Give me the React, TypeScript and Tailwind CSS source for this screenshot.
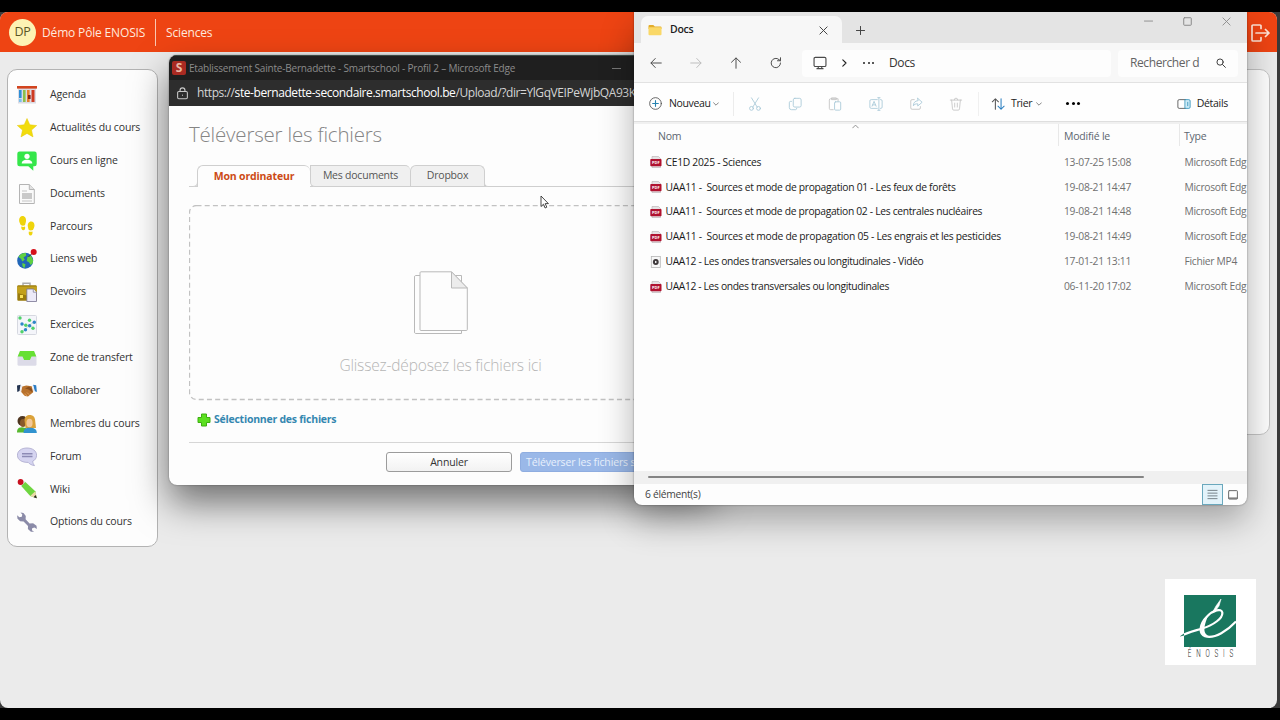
import type { ReactNode } from 'react';

const courseMenu = [
  { id: 'agenda', label: 'Agenda' },
  { id: 'news', label: 'Actualités du cours' },
  { id: 'online', label: 'Cours en ligne' },
  { id: 'documents', label: 'Documents' },
  { id: 'path', label: 'Parcours' },
  { id: 'links', label: 'Liens web' },
  { id: 'homework', label: 'Devoirs' },
  { id: 'exercises', label: 'Exercices' },
  { id: 'transfer', label: 'Zone de transfert' },
  { id: 'collab', label: 'Collaborer' },
  { id: 'members', label: 'Membres du cours' },
  { id: 'forum', label: 'Forum' },
  { id: 'wiki', label: 'Wiki' },
  { id: 'options', label: 'Options du cours' },
];

const files = [
  { name: 'CE1D 2025 - Sciences', date: '13-07-25 15:08', kind: 'pdf', tracking: 'tracking-[-0.28px]' },
  { name: 'UAA11 -  Sources et mode de propagation 01 - Les feux de forêts', date: '19-08-21 14:47', kind: 'pdf', tracking: 'tracking-[-0.3px]' },
  { name: 'UAA11 -  Sources et mode de propagation 02 - Les centrales nucléaires', date: '19-08-21 14:48', kind: 'pdf', tracking: 'tracking-[-0.31px]' },
  { name: 'UAA11 -  Sources et mode de propagation 05 - Les engrais et les pesticides', date: '19-08-21 14:49', kind: 'pdf', tracking: 'tracking-[-0.28px]' },
  { name: 'UAA12 - Les ondes transversales ou longitudinales - Vidéo', date: '17-01-21 13:11', kind: 'video', tracking: 'tracking-[-0.33px]' },
  { name: 'UAA12 - Les ondes transversales ou longitudinales', date: '06-11-20 17:02', kind: 'pdf', tracking: 'tracking-[-0.36px]' },
];

const menuIcons: Record<string, ReactNode> = {
  agenda: (
    <>
      <rect x="1" y="2" width="18" height="16.5" fill="#dcdce4" />
      <rect x="0" y="1" width="20" height="2.6" fill="#d2441f" />
      <rect x="2" y="5" width="2.600" height="8" fill="#2f8fd6" />
      <rect x="2" y="14" width="2.600" height="3" fill="#7ac0ec" />
      <rect x="6" y="5" width="2.600" height="12" fill="#8bbf4a" />
      <rect x="10" y="5" width="2.600" height="12" fill="#e87f2b" />
      <rect x="11" y="10" width="2.600" height="4" fill="#8c1f12" />
      <rect x="14.500" y="5" width="3" height="12" fill="#cf3b22" />
    </>
  ),
  news: <path d="M10 .5l2.800 6.300 6.900.7-5.200 4.600 1.500 6.800-6-3.500-6 3.500 1.500-6.800L.300 7.500l6.900-.7z" fill="#f2dc0c" stroke="#e5c80a" strokeWidth=".5" />,
  online: (
    <>
      <path d="M2.500.5h15a2.200 2.200 0 0 1 2.200 2.200v10.300a2.200 2.200 0 0 1-2.200 2.200H16.300v4.600l-5-4.600H2.500A2.200 2.200 0 0 1 .300 13V2.700A2.200 2.200 0 0 1 2.500.500z" fill="#35e64a" />
      <circle cx="10" cy="5.300" r="2.600" fill="#fff" />
      <path d="M4.700 12.600c0-2.800 2.300-3.900 5.300-3.900s5.300 1.100 5.300 3.900z" fill="#fff" />
    </>
  ),
  documents: (
    <>
      <path d="M2.500.5h9.800l5 5v14H2.500z" fill="#fafafa" stroke="#b4b4b4" />
      <path d="M12.300.5v5h5" fill="#e2e2e2" stroke="#b4b4b4" />
      <path d="M5 7h5M5 17h10" stroke="#c4c4c4" strokeWidth="1.200" />
      <rect x="5" y="9" width="10" height="6" fill="#c9c9c9" />
    </>
  ),
  path: (
    <g fill="#efd40c">
      <path d="M5.500 0C8 0 9.300 2.400 9 5c-.2 1.800-.7 3-1 4.200-1.500.7-3 .6-4.200-.1C3.200 7.600 2 6 2.100 4 2.200 1.800 3.500 0 5.500 0z" />
      <path d="M4.300 10.500c1.200.6 2.600.6 3.700.1.600 1.900-.1 3.700-1.600 3.700-1.600 0-2.400-1.900-2.100-3.800z" />
      <path d="M14.200 5.500c-2.500 0-3.700 2.400-3.400 4.700.2 1.600.7 2.800 1 3.900 1.400.6 2.900.5 4.100-.1.700-1.500 1.700-2.900 1.600-4.800-.1-2.200-1.300-3.700-3.300-3.700z" />
      <path d="M15.500 15.400c-1.200.6-2.500.6-3.600.1-.6 1.900.1 4 1.600 4 1.600 0 2.300-2.200 2-4.100z" />
    </g>
  ),
  links: (
    <>
      <circle cx="8.200" cy="11.700" r="8" fill="#2166b8" />
      <path d="M1.500 8C3 5 6 3.600 8.800 4l.5 2.500-2.800 2 1.300 2.300-2.600 1.800-1-2.600zM10.500 8l3-1.500c2.200 2.200 3 5 2.300 7.300l-2 2.400-1.800-3-2.300-1.200zM5.500 14l3 1.200-1 3.900c-1.800-.6-2.600-2.600-2-5.100z" fill="#5fd042" />
      <path d="M11.500 8l4-4" stroke="#333" strokeWidth="1" />
      <circle cx="16.700" cy="3" r="3" fill="#d6101a" />
    </>
  ),
  homework: (
    <>
      <path d="M6 3.500V1.200h7v2.300" fill="none" stroke="#aaa" strokeWidth="1.500" />
      <rect x=".3" y="3.300" width="19.400" height="15.500" rx="1" fill="#9a7b0c" />
      <path d="M.3 4.500h19.400V11L10 13.500.300 11z" fill="#c2a01c" />
      <rect x="3" y="13" width="3" height="3" fill="#fbe35a" />
      <path d="M9.800 7h6.500l3.200 3.200v9.300H9.800z" fill="#eceaf8" stroke="#777392" strokeWidth=".8" />
      <path d="M16.300 7v3.200h3.200" fill="#fff" stroke="#777392" strokeWidth=".7" />
    </>
  ),
  exercises: (
    <>
      <rect x=".5" y=".5" width="19" height="19" rx="1" fill="#f4f5fa" stroke="#d6d8e0" />
      <path d="M5 9l4 1.500 6 1M8 15l4-5 5-2.500M5 16.500l4-2" stroke="#b9d9cc" strokeWidth=".8" fill="none" />
      <g fill="#4fd16a">
        <circle cx="3" cy="3" r="1.700" /><circle cx="12.500" cy="5.300" r="1.700" /><circle cx="8.800" cy="10.300" r="1.700" /><circle cx="16" cy="13.300" r="1.700" /><circle cx="5" cy="16.800" r="1.700" />
      </g>
      <g fill="#2f86c8">
        <circle cx="5" cy="9" r="1.700" /><circle cx="12.600" cy="10.700" r="1.700" /><circle cx="17.300" cy="7.300" r="1.700" /><circle cx="8.500" cy="14.700" r="1.700" />
      </g>
    </>
  ),
  transfer: (
    <>
      <path d="M3 3h14l2.500 6v7.300a1.500 1.500 0 0 1-1.500 1.500H2A1.500 1.500 0 0 1 .500 16.300V9z" fill="#dcdbe8" />
      <path d="M3 3h14l2.300 5.600h-4.800l-1.600 3.300H7.100L5.500 8.600H.700z" fill="#66e032" />
    </>
  ),
  collab: (
    <>
      <path d="M0 4.500l3.600-.7L2.500 10 .300 11z" fill="#23334f" />
      <path d="M16 3.800l3.200.500.700 6.700-2-.8z" fill="#2b7cc4" />
      <path d="M4 4.500l1.200-.3L4 11l-1-.6zM15.200 4.200l1 .3 1 5.900-1 .4z" fill="#e8e8ee" />
      <path d="M5.300 5.500l4-1 5.400.700 1.500 6-5.200 4.300L8 15 4.200 11z" fill="#b9722c" />
      <path d="M8 7.500l4-2 3 2.500.500 3.300-4.500-3z" fill="#8a4f1d" />
      <path d="M8 14.800l-2-2M10 15l-2-2.500M12.300 13.800L10 11.500" stroke="#e0a261" strokeWidth=".9" />
    </>
  ),
  members: (
    <>
      <path d="M0 18.500c0-3.800 1.500-5 5-5.200l4.500 1v4.200z" fill="#58b830" />
      <circle cx="5.500" cy="7" r="5" fill="#4f3620" />
      <ellipse cx="6" cy="9" rx="3" ry="4" fill="#8b5a2b" />
      <path d="M7.500 6c0-3.500 2.500-5 5.300-5 3.200 0 5.400 2 5.400 6l.8 7H8.500z" fill="#dba23a" />
      <ellipse cx="12.500" cy="9" rx="3.100" ry="4.300" fill="#f4c99a" />
      <path d="M6.500 19c0-3.800 2-5.300 6-5.300 4.500 0 7.300 1.300 7.300 5.300z" fill="#3193cf" />
    </>
  ),
  forum: (
    <>
      <path d="M10 1c5.600 0 9.600 3 9.600 7.200 0 3-1.700 5-4 6.200.2 1.800 1 3 1.900 4.200-2.800-.3-5-1.600-6.300-3.200C5 15.600.400 12.800.400 8.200.4 4 4.400 1 10 1z" fill="#d5d4f0" stroke="#a9a7cc" strokeWidth=".8" />
      <path d="M5 6.800h10.500M5 9.500h10.500" stroke="#8d8bb5" strokeWidth="1.500" />
    </>
  ),
  wiki: (
    <>
      <path d="M3.800 6.500L7.800 2.600 18.300 12.300l1.600 7-6.700-2.300z" fill="#6fd640" />
      <path d="M18.300 12.300l1.600 7-6.700-2.300z" fill="#ecd9a8" />
      <path d="M18.600 16l1.300 3.300-3.300-1.100z" fill="#222" />
      <path d="M2.600 5.200L6.300 1.400l1.900 1.700-4 4z" fill="#e9eef0" />
      <circle cx="3.600" cy="3" r="2.900" fill="#c8101f" />
    </>
  ),
  options: (
    <path d="M3.500.5l3 .6 2.300 2.800-.2 3.300 4 4.200 3.500-.2 3.400 2.500.4 3.200-2.500-1.500-2.200.8-.3 2 2.200 1.600-3.200-.1-3-2.800.1-2.900-4.400-4.500-3.400-.2L.500 6.700.100 3.200 2.400 5.200l2.400-.5.500-2.200z" fill="#8b8ba8" />
  ),
};

function Svg({ size = 14, box = 16, className = '', children }: { size?: number; box?: number; className?: string; children: ReactNode }) {
  return (
    <svg width={size} height={size} viewBox={`0 0 ${box} ${box}`} fill="none" stroke="currentColor" strokeLinecap="round" strokeLinejoin="round" className={`block shrink-0 ${className}`}>
      {children}
    </svg>
  );
}

function PageHeader() {
  return (
    <header className="flex h-10 items-center bg-[#ee4413] pl-[9px] pr-[7px] pt-px text-white">
      <div className="flex size-[27px] items-center justify-center rounded-full bg-[#fdf3b4] text-[12.5px] tracking-[-0.3px] text-[#5a5624]">DP</div>
      <span className="ml-[6px] w-[113px] whitespace-nowrap text-[12px] tracking-[-0.16px] text-[#ffe9de]">Démo Pôle ENOSIS</span>
      <span className="h-[27px] w-px bg-[#f9c7b2]" />
      <span className="ml-[10px] text-[12px] tracking-[-0.16px] text-[#ffe9de]">Sciences</span>
      <Svg size={20} box={20} className="ml-auto text-[#ffe3d6]">
        <path d="M11 5.500V3a1 1 0 0 0-1-1H3a1 1 0 0 0-1 1v14a1 1 0 0 0 1 1h7a1 1 0 0 0 1-1v-2.500M6 10h13M15.500 6.500L19 10l-3.500 3.500" strokeWidth="1.700" />
      </Svg>
    </header>
  );
}

function CourseMenu() {
  return (
    <nav className="h-[478px] w-[151px] rounded-[10px] border border-[#b3b3b3] bg-[#fdfdfd] pl-[9px] pt-[8.500px]">
      {courseMenu.map((item) => (
        <a key={item.id} className="flex h-[32.88px] items-center">
          <svg width="20" height="20" viewBox="0 0 20 20" className="block shrink-0">{menuIcons[item.id]}</svg>
          <span className="ml-[13px] whitespace-nowrap text-[10.500px] tracking-[-0.15px] text-[#333]">{item.label}</span>
        </a>
      ))}
    </nav>
  );
}

function UploadTabs() {
  return (
    <div className="mt-[15px] flex h-[22px] items-end border-b border-[#cfcfcf] text-[10.500px] text-[#555]">
      <div className="-mb-px h-[8px] w-[9px] rounded-br-[5px] border-b border-r border-[#cfcfcf] bg-[#fdfdfd]" />
      <div className="-mb-px -ml-px flex h-[22px] w-[113px] items-center justify-center rounded-t-[6px] border-l border-t border-[#cfcfcf] bg-[#fdfdfd] font-bold tracking-[-0.15px] text-[#cc4a15]">Mon ordinateur</div>
      <div className="-mb-px flex h-[22px] w-[100px] items-center justify-center rounded-bl-[5px] rounded-tr-[5px] border border-r-0 border-[#cfcfcf] bg-[#f0f0f0] tracking-[-0.22px]">Mes documents</div>
      <div className="flex h-[21px] w-[75px] items-center justify-center rounded-t-[6px] border border-b-0 border-[#cfcfcf] bg-[#f0f0f0] tracking-[-0.2px]">Dropbox</div>
      <div className="-mb-px -ml-px h-[6px] w-[4px] rounded-bl-[4px] border-b border-l border-[#cfcfcf] bg-[#fdfdfd]" />
    </div>
  );
}

function UploadWindow() {
  return (
    <section className="absolute left-[169px] top-[43px] flex h-[430px] w-[545px] flex-col overflow-hidden rounded-lg bg-[#fdfdfd] shadow-[0_18px_36px_rgba(0,0,0,0.52),0_0_2px_rgba(0,0,0,0.4)]">
      <div className="flex h-[25px] shrink-0 items-center border-t border-[#3a4a45] bg-[#1f1f1f] pl-[3px]">
        <span className="flex size-[14px] items-center justify-center rounded-[2px] bg-[#a92a22] text-[12px] font-bold leading-none text-[#e9b9a5]">S</span>
        <span className="ml-[3px] w-[423px] whitespace-nowrap text-[10px] tracking-[-0.19px] text-[#8b8b8b]">Etablissement Sainte-Bernadette - Smartschool - Profil 2 – Microsoft Edge</span>
        <span className="h-px w-[9px] bg-[#777]" />
      </div>
      <div className="flex h-[26px] shrink-0 items-center bg-[#2d2d2d] pl-[7px] text-[#c8c8c8]">
        <Svg size={13}>
          <rect x="2" y="5.500" width="12" height="9" rx="1.500" strokeWidth="1.300" />
          <path d="M5 5.500V4a3 3 0 0 1 6 0v1.500M8 9.800v.3" strokeWidth="1.400" />
        </Svg>
        <span className="ml-[8px] whitespace-nowrap text-[12px] tracking-[-0.42px] text-[#d5d5d5]">
          https://<span className="text-white">ste-bernadette-secondaire.smartschool.be</span>/Upload/?dir=YlGqVEIPeWjbQA93K
        </span>
      </div>

      <div className="flex flex-1 flex-col px-5">
        <h1 className="mt-[12px] h-[32px] text-[20.500px] font-light leading-[32px] tracking-[-0.2px] text-[#858585]">Téléverser les fichiers</h1>
        <UploadTabs />

        <div className="mt-[18px] flex h-[196px] w-[503px] flex-col items-center rounded-lg">
          <svg width="505" height="196" className="absolute left-5 block">
            <rect x=".5" y=".5" width="503" height="194" rx="7" fill="none" stroke="#c2c2c2" strokeWidth="1.300" strokeDasharray="5 3.200" />
          </svg>
          <svg width="56" height="64" viewBox="0 0 56 64" className="mt-[66px] block" fill="#fdfdfd" stroke="#b9b9b9">
            <path d="M2.500 4.500h46v58h-46a1.500 1.500 0 0 1-1-1.500V6a1.500 1.500 0 0 1 1-1.500z" />
            <path d="M8 .800h30.500L54.300 17v41.500a1 1 0 0 1-1 1H8a1 1 0 0 1-1-1V1.800a1 1 0 0 1 1-1z" />
            <path d="M38.500.800V17h15.800z" fill="#ececec" />
          </svg>
          <p className="mt-[16px] text-[15.500px] font-light leading-[28px] tracking-[-0.18px] text-[#b5b5b5]">Glissez-déposez les fichiers ici</p>
        </div>

        <a className="mt-[11px] flex h-4 items-center pl-[8px] text-[10.500px] font-bold tracking-[-0.24px] text-[#3487b0]">
          <svg width="14" height="14" viewBox="0 0 14 14" className="mr-[3px] block">
            <path d="M4.500 1h5v3.500H13v5H9.500V13h-5V9.500H1v-5h3.500z" fill="#5be01f" stroke="#3fae12" strokeLinejoin="round" />
          </svg>
          Sélectionner des fichiers
        </a>

        <div className="mt-[14px] flex border-t border-[#d6d6d6] pl-[197px] pt-[9px]">
          <button className="h-[20px] w-[126px] rounded-[3px] border border-[#9c9c9c] bg-linear-to-b from-white to-[#f2f2f2] text-[10.500px] leading-[18px] tracking-[-0.15px] text-[#333]">Annuler</button>
          <button className="ml-[8px] h-[20px] w-[174px] whitespace-nowrap rounded-[3px] border border-[#8fade0] bg-[#9ab8e8] pl-[5px] text-left text-[10.500px] leading-[18px] tracking-[-0.15px] text-[#e8f0fc]">Téléverser les fichiers sélectionnés</button>
        </div>
      </div>
    </section>
  );
}

function PdfIcon() {
  return (
    <svg width="12" height="12" viewBox="0 0 12 12" className="block shrink-0">
      <path d="M2 .500h6.500L10.500 2.500v9H2z" fill="#e5e1e3" stroke="#b9aeb2" strokeWidth=".6" />
      <rect x=".3" y="3" width="11.200" height="7.200" rx=".8" fill="#b0122f" />
      <text x="5.900" y="8" textAnchor="middle" fontSize="4" fontWeight="700" fill="#fff" fontFamily="Open Sans, sans-serif">PDF</text>
    </svg>
  );
}

function VideoIcon() {
  return (
    <svg width="12" height="12" viewBox="0 0 12 12" className="block shrink-0">
      <rect x="1.300" y=".5" width="9" height="11" fill="#f7f7f7" stroke="#b5b5b5" strokeWidth=".8" />
      <circle cx="5.800" cy="6" r="2.900" fill="#3f3a3c" />
      <path d="M5 4.700l2.200 1.300L5 7.300z" fill="#fff" />
    </svg>
  );
}

function ExplorerTitleBar() {
  return (
    <div className="flex h-[31px] shrink-0 bg-[#e4e4e4] pl-[7px]">
      <div className="mt-1 flex h-[27px] w-[201px] items-center rounded-t-[7px] bg-[#f7f7f7] pl-[7px] pr-[14px] pt-px">
        <svg width="14" height="12" viewBox="0 0 14 12" className="block">
          <path d="M.5 2a1 1 0 0 1 1-1h3.800l1.500 1.500h5.700a1 1 0 0 1 1 1V5H.500z" fill="#e3ad2b" />
          <rect x=".5" y="3.300" width="13" height="8" rx="1" fill="#fad867" />
        </svg>
        <span className="ml-[8px] text-[10.500px] font-semibold tracking-[-0.3px] text-[#1d1d1d]">Docs</span>
        <Svg size={9} box={10} className="ml-auto text-[#444]"><path d="M1 1l8 8M9 1L1 9" strokeWidth="1.100" /></Svg>
      </div>
      <Svg size={9} box={10} className="ml-[14px] mt-[14px] text-[#444]"><path d="M5 .500v9M.500 5h9" strokeWidth="1.100" /></Svg>
      <div className="ml-auto flex items-start gap-[30px] pr-[16px] pt-[5px] text-[#8a8a8a]">
        <Svg size={9} box={10}><path d="M.5 4.500h9" /></Svg>
        <Svg size={9} box={10}><rect x=".8" y=".8" width="8.400" height="8.400" rx=".8" strokeWidth="1.100" /></Svg>
        <Svg size={9} box={10}><path d="M1 1l8 8M9 1L1 9" /></Svg>
      </div>
    </div>
  );
}

function ExplorerNav() {
  return (
    <div className="flex h-10 shrink-0 items-center border-b border-[#e2e2e2] bg-[#f7f7f7] pl-[16px] pr-[8px] pt-px text-[#4a4a4a]">
      <div className="flex w-[152px] shrink-0 gap-[28px]">
        <Svg size={12}><path d="M15 8H1.500M7 2L1.200 8 7 14" strokeWidth="1.300" /></Svg>
        <Svg size={12} className="text-[#bcbcbc]"><path d="M1 8h13.500M9 2l5.800 6L9 14" strokeWidth="1.300" /></Svg>
        <Svg size={12}><path d="M8 15V1.500M2 7l6-5.800L14 7" strokeWidth="1.300" /></Svg>
        <Svg size={12}><path d="M14 8a6.200 6.200 0 1 1-2-4.500L14 5M14 1v4h-4" strokeWidth="1.300" /></Svg>
      </div>
      <div className="flex h-[27px] w-[309px] shrink-0 items-center rounded bg-[#fdfdfd] pl-[11px]">
        <Svg size={14}><rect x="1.200" y="1.500" width="13.600" height="10.500" rx="1.500" strokeWidth="1.300" /><path d="M4.500 14.500h7M6 12.500v2M10 12.500v2" strokeWidth="1.300" /></Svg>
        <Svg size={8} box={10} className="ml-[13px] text-[#222]"><path d="M3.500 1l4 4-4 4" strokeWidth="1.400" /></Svg>
        <span className="ml-[15px] flex gap-[2.500px]">
          <i className="size-[2px] rounded-full bg-[#222]" />
          <i className="size-[2px] rounded-full bg-[#222]" />
          <i className="size-[2px] rounded-full bg-[#222]" />
        </span>
        <span className="ml-[15px] text-[12px] tracking-[-0.4px] text-[#333]">Docs</span>
      </div>
      <div className="ml-[7px] flex h-[27px] w-[120px] shrink-0 items-center rounded bg-[#fdfdfd] pl-[12px]">
        <span className="w-[70px] whitespace-nowrap text-[12px] tracking-[-0.4px] text-[#636363]">Rechercher d</span>
        <Svg size={10} className="ml-[16px] text-[#333]"><circle cx="6.500" cy="6.500" r="5" strokeWidth="1.500" /><path d="M10.500 10.500L15 15" strokeWidth="1.500" /></Svg>
      </div>
    </div>
  );
}

function ExplorerToolbar() {
  return (
    <div className="flex h-[39px] shrink-0 items-center border-b border-[#dedede] bg-[#fefefe] pl-[15px] pr-[19px] pt-[3px] text-[10.500px] text-[#222]">
      <Svg size={13}><circle cx="8" cy="8" r="7.200" stroke="#555" strokeWidth="1.100" /><path d="M8 4.500v7M4.500 8h7" stroke="#2682b0" strokeWidth="1.400" /></Svg>
      <span className="ml-[7px] w-[44px] tracking-[-0.35px]">Nouveau</span>
      <Svg size={6} box={10} className="text-[#777]"><path d="M1 3l4 4 4-4" strokeWidth="1.500" /></Svg>
      <span className="ml-[14px] h-[24px] w-px bg-[#ececec]" />
      <div className="ml-[14px] flex w-[215px] shrink-0 gap-[26.200px] text-[#a9c9d8]">
        <Svg><path d="M4 1l6.500 10.500M12 1L5.500 11.500" /><circle cx="4" cy="13" r="2.200" /><circle cx="12" cy="13" r="2.200" /></Svg>
        <Svg><rect x="6" y="1.500" width="9" height="10" rx="1.800" /><path d="M4 5H3a1.500 1.500 0 0 0-1.500 1.500V12A2.500 2.500 0 0 0 4 14.500h4.500A1.500 1.500 0 0 0 10 13" /></Svg>
        <Svg><path d="M6 14.500H3A1.500 1.500 0 0 1 1.500 13V3.500A1.500 1.500 0 0 1 3 2h8.500V5M4.500 1h5v2h-5z" stroke="#c3c3c3" /><rect x="7.500" y="5.500" width="7" height="9.500" rx="1.200" /></Svg>
        <Svg><path d="M9.500 3H2.500A1.500 1.500 0 0 0 1 4.500v7A1.500 1.500 0 0 0 2.500 13h7M13 3h.5A1.500 1.500 0 0 1 15 4.500v7a1.500 1.500 0 0 1-1.500 1.500H13M11.300 1v14M10 .800h2.600M10 15.200h2.600M3.500 10.500L5.800 5l2.300 5.500M4.300 9h3" /></Svg>
        <Svg><path d="M6 3H3.500A1.500 1.500 0 0 0 2 4.500v8A1.500 1.500 0 0 0 3.500 14h8a1.500 1.500 0 0 0 1.500-1.500V11" stroke="#c3c3c3" /><path d="M10 1.500l5 4.500-5 4.300V7.800C7.500 7.600 6 8.500 5 10c0-3.300 1.700-5.500 5-5.800z" /></Svg>
        <Svg className="text-[#c6c6c6]"><path d="M1.500 3.500h13M3 3.500l1 10a1.500 1.500 0 0 0 1.500 1.500h5a1.500 1.500 0 0 0 1.500-1.500l1-10M6 3.300a2 2 0 0 1 4 0M6.500 7v4.500M9.500 7v4.500" /></Svg>
      </div>
      <span className="ml-[15px] h-[24px] w-px bg-[#f0f0f0]" />
      <Svg size={14} className="ml-[12px] text-[#555]"><path d="M5 14V2M1.500 5.500L5 2l3.500 3.500" strokeWidth="1.200" /><path d="M11.500 2v12M8 10.500l3.500 3.500 3.500-3.500" stroke="#2c7fc0" strokeWidth="1.200" /></Svg>
      <span className="ml-[6px] w-[25px] tracking-[-0.35px]">Trier</span>
      <Svg size={6} box={10} className="text-[#777]"><path d="M1 3l4 4 4-4" strokeWidth="1.500" /></Svg>
      <span className="ml-[24px] flex gap-[2.500px]">
        <i className="size-[3px] rounded-full bg-black" />
        <i className="size-[3px] rounded-full bg-black" />
        <i className="size-[3px] rounded-full bg-black" />
      </span>
      <Svg size={14} className="ml-auto"><path d="M10 3H2.500A1.500 1.500 0 0 0 1 4.500v7A1.500 1.500 0 0 0 2.500 13H10" stroke="#555" /><path d="M9.500 3h4A1.500 1.500 0 0 1 15 4.500v7a1.500 1.500 0 0 1-1.500 1.500h-4zM12.300 6v4" stroke="#3795bd" fill="#cdebf7" /></Svg>
      <span className="ml-[6px] tracking-[-0.3px]">Détails</span>
    </div>
  );
}

function ExplorerWindow() {
  return (
    <section className="absolute left-[634px] top-0 flex h-[493px] w-[613px] flex-col overflow-hidden rounded-b-lg bg-[#fdfdfd] shadow-[0_16px_34px_rgba(0,0,0,0.3),0_0_2px_rgba(0,0,0,0.45)]">
      <ExplorerTitleBar />
      <ExplorerNav />
      <ExplorerToolbar />
      <div className="flex h-[28px] shrink-0 items-start border-t-2 border-[#f0f0f0] text-[10.500px] tracking-[-0.22px] text-[#5c6670]">
        <span className="w-[424px] shrink-0 pl-[24px] leading-[24px]">Nom</span>
        <span className="h-[22px] w-[121px] shrink-0 border-l border-[#e8e8e8] pl-[5px] leading-[24px]">Modifié le</span>
        <span className="h-[22px] border-l border-[#e8e8e8] pl-[4px] leading-[24px]">Type</span>
        <Svg size={7} box={10} className="absolute left-[218px] top-[111px] text-[#888]"><path d="M1 7l4-4 4 4" strokeWidth="1.300" /></Svg>
      </div>
      <div className="flex-1 text-[10.300px]">
        {files.map((file) => (
          <div key={file.name} className="flex h-[24.850px] items-center whitespace-pre">
            <div className="flex w-[430px] shrink-0 items-center pl-[16px]">
              {file.kind === 'pdf' ? <PdfIcon /> : <VideoIcon />}
              <span className={`ml-[3.500px] text-[#1a1a1a] ${file.tracking}`}>{file.name}</span>
            </div>
            <span className="w-[120.500px] shrink-0 tracking-[-0.27px] text-[#707070]">{file.date}</span>
            <span className="tracking-[-0.3px] text-[#707070]">{file.kind === 'pdf' ? 'Microsoft Edg' : 'Fichier MP4'}</span>
          </div>
        ))}
      </div>
      <div className="flex h-[13px] shrink-0 items-start bg-[#f0f0f0] pl-[14px] pt-[5px]">
        <span className="h-[2px] w-[496px] rounded bg-[#848484]" />
      </div>
      <div className="flex h-[21px] shrink-0 items-center pl-[11px] pr-[9px] text-[10.300px] text-[#444]">
        <span className="tracking-[-0.3px]">6 élément(s)</span>
        <span className="ml-auto flex h-[21px] w-[21px] items-center justify-center border border-[#6aa8bd] bg-[#e3f3fa]">
          <Svg size={11} box={12} className="text-[#6e7a80]"><path d="M1 1.500h10M1 4.500h10M1 7.500h10M1 10.500h10" strokeWidth="1" /></Svg>
        </span>
        <Svg size={10} className="ml-[5px] text-[#6a6a6a]"><rect x="1" y="1" width="14" height="13.500" rx="1" strokeWidth="1.600" /><path d="M1.500 13h13" strokeWidth="2" /></Svg>
      </div>
    </section>
  );
}

function EnosisLogo() {
  return (
    <div className="absolute left-[1165px] top-[567px] flex h-[86px] w-[91px] flex-col items-center bg-white pr-px pt-[15px]">
      <svg width="60" height="53" viewBox="0 0 60 53" className="block">
        <rect x="4" y="1" width="52" height="52" fill="#19775f" />
        <path d="M-1 42.700C7 38.500 14 37 22 34.500 34 31 43 24 42.300 18.500 41.500 14 33 16 27 22.500 20 29.500 18 39.500 25 42.300 35 45.500 48 36 56 27.500" fill="none" stroke="#fff" strokeWidth="2.200" />
        <path d="M28 22c-8 8-9.500 18-3 20.500 3 1.200 6 1 9-.3-9 .8-13-4.200-6-20.200z" fill="#fff" />
        <path d="M-1 42.800L4 39.500v2z" fill="#19775f" />
        <path d="M41 5l-2 7 -4 5.500-2.500.8 3.500-6.300z" fill="#fff" stroke="#fff" strokeWidth=".6" />
      </svg>
      <span className="ml-[5px] scale-x-60 whitespace-nowrap font-['Roboto',sans-serif] text-[10.500px] font-light leading-[13px] tracking-[8px] text-[#222]">ÉNOSIS</span>
    </div>
  );
}

export default function App() {
  return (
    <div className="h-[720px] w-[1280px] overflow-hidden bg-black py-3 font-['Open_Sans',sans-serif]">
      <div className="h-[696px] bg-[#3a3a3a] pr-[3px]">
        <main className="relative h-[696px] w-[1277px]">
          <div className="h-full overflow-hidden rounded-lg bg-[#ebebeb]">
            <PageHeader />
            <div className="flex items-start justify-between px-[7px] pt-[17px]">
              <CourseMenu />
              <div className="h-[366px] w-[900px] rounded-[10px] border border-[#c4c4c4] bg-[#fdfdfd]" />
            </div>
            <UploadWindow />
            <ExplorerWindow />
            <EnosisLogo />
          </div>
          <svg width="9" height="14" viewBox="0 0 9 14" className="absolute left-[540px] top-[183px] block">
            <path d="M1 1v10.500l2.500-2.300 1.600 3.800 1.700-.8-1.600-3.600h3.200z" fill="#fff" stroke="#333" strokeWidth=".9" />
          </svg>
        </main>
      </div>
    </div>
  );
}
